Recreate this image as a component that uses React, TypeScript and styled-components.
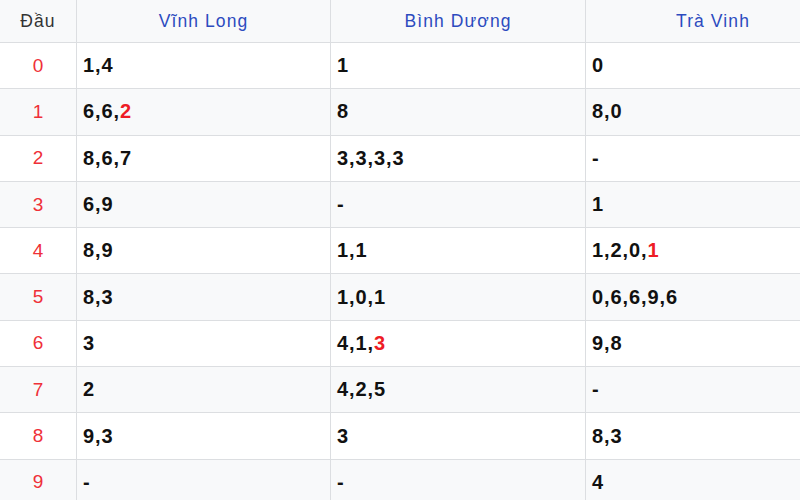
import styled, { createGlobalStyle } from "styled-components";

const Global = createGlobalStyle`
  html, body {
    margin: 0;
    padding: 0;
    background: #ffffff;
    overflow: hidden;
  }
  body {
    font-family: "Liberation Sans", Arial, sans-serif;
  }
`

const Page = styled.div`
  width: 800px;
  height: 500px;
  overflow: hidden;
`

const Table = styled.table`
  width: 841px;
  border-collapse: collapse;
  table-layout: fixed;
  margin-top: -1px;
  margin-left: -1px;
`

const Row = styled.tr<{ $alt?: boolean }>`
  background-color: ${(p) => (p.$alt ? "#f8f9fa" : "#ffffff")};
`

const HeadCell = styled.th<{ $muted?: boolean }>`
  height: 42px;
  border: 1px solid #dcdee1;
  font-weight: 400;
  font-size: 17.5px;
  letter-spacing: 1.1px;
  color: ${(p) => (p.$muted ? "#333333" : "#2c4bbf")};
  text-align: center;
  padding: 0;
  vertical-align: middle;
`

const KeyCell = styled.td`
  height: 45.3px;
  border: 1px solid #dcdee1;
  color: #ef3038;
  font-size: 19px;
  text-align: center;
  padding: 0;
`

const Cell = styled.td`
  height: 45.3px;
  border: 1px solid #dcdee1;
  color: #111111;
  font-size: 20px;
  letter-spacing: 0.9px;
  font-weight: 700;
  padding: 0 0 0 6px;
`

const Hit = styled.span`
  color: #ee1c25;
`

const cols = ["Vĩnh Long", "Bình Dương", "Trà Vinh"];

// last number marked with * is highlighted red
const data: string[][] = [
  ["1,4", "1", "0"],
  ["6,6,2*", "8", "8,0"],
  ["8,6,7", "3,3,3,3", "-"],
  ["6,9", "-", "1"],
  ["8,9", "1,1", "1,2,0,1*"],
  ["8,3", "1,0,1", "0,6,6,9,6"],
  ["3", "4,1,3*", "9,8"],
  ["2", "4,2,5", "-"],
  ["9,3", "3", "8,3"],
  ["-", "-", "4"],
];

function Value({ text }: { text: string }) {
  if (!text.endsWith("*")) return <>{text}</>;
  const raw = text.slice(0, -1);
  const i = raw.lastIndexOf(",");
  return (
    <>
      {raw.slice(0, i + 1)}
      <Hit>{raw.slice(i + 1)}</Hit>
    </>
  );
}

export default function App() {
  return (
    <Page>
      <Global />
      <Table>
        <colgroup>
          <col style={{ width: 77 }} />
          <col style={{ width: 254 }} />
          <col style={{ width: 255 }} />
          <col style={{ width: 255 }} />
        </colgroup>
        <thead>
          <Row $alt>
            <HeadCell $muted>Đầu</HeadCell>
            {cols.map((c) => (
              <HeadCell key={c}>{c}</HeadCell>
            ))}
          </Row>
        </thead>
        <tbody>
          {data.map((r, i) => (
            <Row key={i} $alt={i % 2 === 1}>
              <KeyCell>{i}</KeyCell>
              {r.map((v, j) => (
                <Cell key={j}>
                  <Value text={v} />
                </Cell>
              ))}
            </Row>
          ))}
        </tbody>
      </Table>
    </Page>
  );
}
